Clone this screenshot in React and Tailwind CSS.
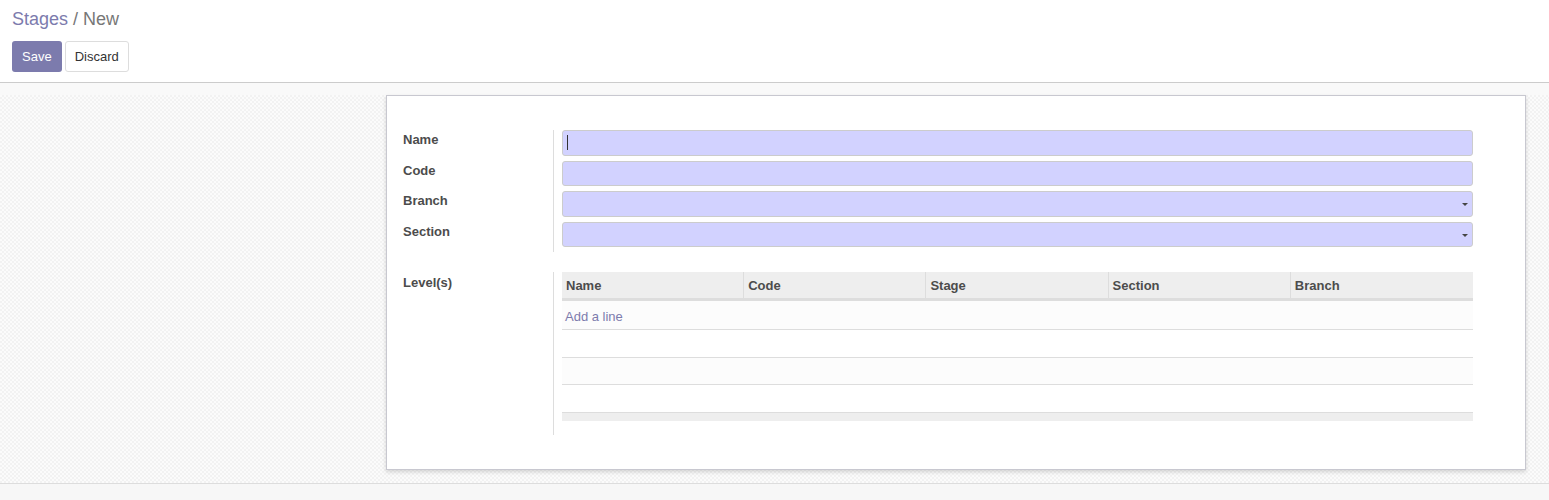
import React from 'react';

const FIELDS = [
  { label: 'Name', select: false, cursor: true },
  { label: 'Code', select: false },
  { label: 'Branch', select: true },
  { label: 'Section', select: true },
];

const COLUMNS = ['Name', 'Code', 'Stage', 'Section', 'Branch'];

const Caret = () => (
  <span className="absolute right-[4px] top-[11px] w-0 h-0 border-l-[3px] border-r-[3px] border-t-[3px] border-l-transparent border-r-transparent border-t-[#444]"></span>
);

export default function App() {
  return (
    <div className="w-[1549px] h-[500px] flex flex-col bg-white text-[13px] text-[#4c4c4c] font-['Liberation_Sans',Arial,sans-serif] overflow-hidden">
      {/* Control panel */}
      <div className="h-[83px] shrink-0 px-[12px] pt-[8px] border-b border-[#cccccc]">
        <div className="text-[18px] leading-[22px] h-[22px]">
          <span className="text-[#7c7bad]">Stages</span>
          <span className="text-[#777777]"> / New</span>
        </div>
        <div className="flex gap-[3px] mt-[11px]">
          <button className="h-[31px] px-[10px] rounded-[3px] bg-[#7c7bad] text-white text-[13px]">Save</button>
          <button className="h-[31px] px-[9px] rounded-[3px] bg-white border border-[#dddddd] text-[#333] text-[13px]">Discard</button>
        </div>
      </div>

      {/* Content area */}
      <div className="flex-1 flex flex-col bg-[repeating-conic-gradient(#f2f2f2_0%_25%,#fbfbfb_0%_50%)] bg-[length:4px_4px]">
        <div className="h-[12px] bg-[#f9f9f9]"></div>
        <div className="flex pl-[386px]">
          <div className="w-[1140px] h-[375px] bg-white border border-[#c8c8d0] shadow-[0_2px_4px_rgba(0,0,0,0.15)] pt-[34px] pl-[16px] pr-[52px]">
            <div className="flex">
              <div className="w-[151px] border-r border-[#dddddd] flex flex-col">
                {FIELDS.map((f) => (
                  <div key={f.label} className="h-[30.5px] font-bold">{f.label}</div>
                ))}
              </div>
              <div className="flex-1 pl-[8px] flex flex-col gap-[5px]">
                {FIELDS.map((f) => (
                  <div key={f.label} className="relative h-[25.5px] bg-[#d2d2ff] border border-[#cccccc] rounded-[3px]">
                    {f.cursor && <span className="absolute left-[4px] top-[4px] w-px h-[15px] bg-[#333]"></span>}
                    {f.select && <Caret />}
                  </div>
                ))}
              </div>
            </div>

            <div className="flex mt-[20px]">
              <div className="w-[151px] border-r border-[#dddddd] h-[163px] pt-[1px] font-bold">Level(s)</div>
              <div className="flex-1 pl-[8px]">
                <div className="grid grid-cols-5 h-[29px] bg-[#eeeeee] border-b-[3px] border-[#dddddd]">
                  {COLUMNS.map((c, i) => (
                    <div key={c} className={`px-[4px] pt-[4px] font-bold ${i < 4 ? 'border-r border-[#dddddd]' : ''}`}>{c}</div>
                  ))}
                </div>
                <div className="h-[29px] bg-[#fcfcfc] border-b border-[#dddddd] px-[3px] pt-[6px] text-[#7c7bad]">Add a line</div>
                <div className="h-[28px] bg-white border-b border-[#dddddd]"></div>
                <div className="h-[27px] bg-[#fcfcfc] border-b border-[#dddddd]"></div>
                <div className="h-[28px] bg-white border-b border-[#dddddd]"></div>
                <div className="h-[8px] bg-[#eeeeee]"></div>
              </div>
            </div>
          </div>
        </div>
        <div className="flex-1"></div>
        <div className="h-[17px] bg-[#f7f7f7] border-t border-[#dddddd]"></div>
      </div>
    </div>
  );
}
